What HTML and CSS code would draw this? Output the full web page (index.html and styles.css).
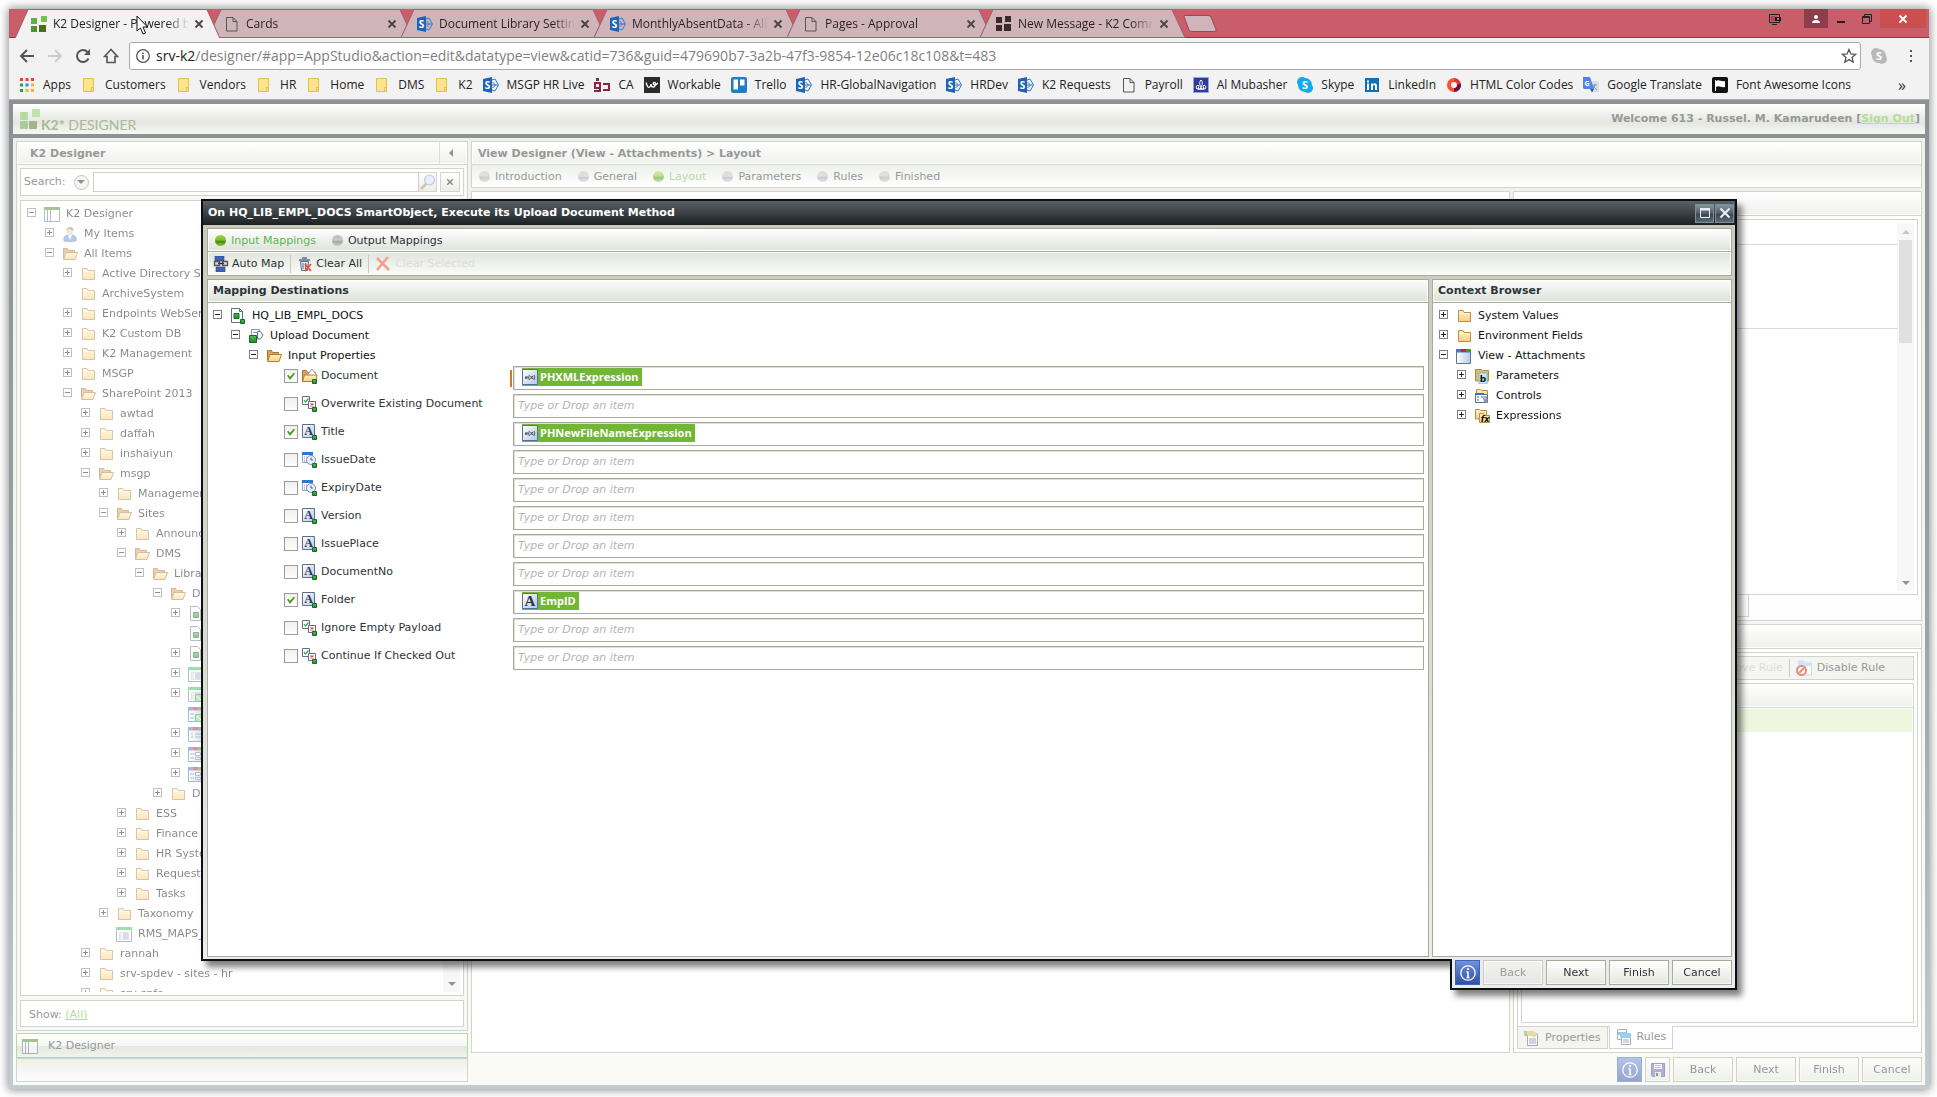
FILE: index.html
```
<!DOCTYPE html>
<html lang="en">
<head>
<meta charset="utf-8">
<title>K2 Designer</title>
<link rel="stylesheet" href="styles.css">
</head>
<body>
<svg class="defs" aria-hidden="true">
  <defs>
    <linearGradient id="gfold" x1="0" y1="0" x2="0" y2="1"><stop offset="0" stop-color="#fff3c4"/><stop offset="1" stop-color="#f8cf80"/></linearGradient>
    <linearGradient id="ggreen" x1="0" y1="0" x2="0" y2="1"><stop offset="0" stop-color="#5cb65c"/><stop offset="1" stop-color="#1d8a2c"/></linearGradient>
    <linearGradient id="gblue" x1="0" y1="0" x2="1" y2="1"><stop offset="0" stop-color="#fff"/><stop offset="1" stop-color="#b4c6e8"/></linearGradient>
    <linearGradient id="gview" x1="0" y1="0" x2="1" y2="0"><stop offset="0" stop-color="#fff"/><stop offset="1" stop-color="#b9c9e6"/></linearGradient>
    <symbol id="i-folder" viewBox="0 0 16 16"><path d="M2.500 13.500V2.500h4.500l1 2h6.500v9h-12z" fill="url(#gfold)" stroke="#b98b4e"/><path d="M3.500 5.500h10" stroke="#fff8dc"/></symbol>
    <symbol id="i-open" viewBox="0 0 16 16"><path d="M1.500 12.500V2.500h4l1 2h6v3" fill="#dba258" stroke="#a97536"/><path d="M1.500 13.500l2.500-7h11.500l-2.500 7z" fill="url(#gfold)" stroke="#b07e3e"/></symbol>
    <symbol id="i-layout" viewBox="0 0 16 16"><path d="M.5 1.500h15v14H.5z" fill="#fff" stroke="#6c7a94"/><path d="M0 1h16v3H0z" fill="#4f8a2a"/><path d="M3.500 4v11M6.500 4v11" stroke="#6c7a94"/></symbol>
    <symbol id="i-user" viewBox="0 0 16 16"><path d="M2 15c-1-4 1-6 4-6h4c3 0 5 2 4 6-3 1-9 1-12 0z" fill="#6c97dc" stroke="#4a6fb5" stroke-width=".6"/><path d="M6 9l2 5 2-5z" fill="#fff"/><circle cx="8" cy="5" r="3.300" fill="#f2cf9c"/><path d="M4.500 5c-.5-5 7.500-5.500 7 0-1-2-4-1-5-2.500C6 3.500 5 4 4.500 5z" fill="#8b8b86"/></symbol>
    <symbol id="i-doc" viewBox="0 0 16 16"><path d="M2.500.5h7l3 3v11h-10z" fill="#fff" stroke="#6c7a94"/><path d="M5.500 6.500h5v5h-5z" fill="url(#ggreen)" stroke="#146c20"/></symbol>
    <symbol id="i-docg" viewBox="0 0 16 16"><path d="M1.500.5h8l3 3v11h-11z" fill="#fff" stroke="#5d6f91"/><path d="M9.500.5v3h3" fill="none" stroke="#5d6f91"/><path d="M4 5.500h5v5H4z" fill="url(#ggreen)" stroke="#146c20"/><path d="M10.500 11.500h4v4h-4z" fill="url(#ggreen)" stroke="#146c20"/></symbol>
    <symbol id="i-upload" viewBox="0 0 16 16"><path d="M3.500 1.500h8v9h-8z" fill="#fff" stroke="#8a97b0"/><path d="M9.500 3.500h3l2.500 3.500-2.500 4h-3z" fill="#fff" stroke="#5d6f91"/><path d="M5 4.500h5" stroke="#8a97b0"/><path d="M1.500 7.500h7v7h-7z" fill="url(#ggreen)" stroke="#146c20"/></symbol>
    <symbol id="i-list" viewBox="0 0 16 16"><path d="M.5 1.500h15v14H.5z" fill="#fff" stroke="#6c7a94"/><path d="M0 1h16v3H0z" fill="#3fbf52"/><path d="M3.500 6.500h9v7h-9z" fill="none" stroke="#c3cbd8"/><path d="M4.500 8h1m-1 2h1m-1 2h1" stroke="#3fae52"/><path d="M7 8h5M7 10h5M7 12h5" stroke="#6c7a94"/></symbol>
    <symbol id="i-listg" viewBox="0 0 16 16"><use href="#i-list"/><path d="M7.500 8.500h8v7h-8z" fill="#7fd98b" stroke="#2d9a3c"/><path d="M9 10l4 4" stroke="#fff"/></symbol>
    <symbol id="i-view" viewBox="0 0 16 16"><path d="M.5 1.500h14v14H.5z" fill="url(#gview)" stroke="#5b73a8"/><path d="M0 1h15v3.500H0z" fill="#4b74d0"/><path d="M5 1h5v3H5z" fill="#c81f2c"/><path d="M10 1h5v3h-5z" fill="#3f9a2e"/></symbol>
    <symbol id="i-viewl" viewBox="0 0 16 16"><use href="#i-view"/><path d="M3 8h2m-2 3h2M7 8h6M7 11h6" stroke="#6c7a94"/></symbol>
    <symbol id="i-viewg" viewBox="0 0 16 16"><use href="#i-view"/><path d="M2 8h4m-4 4h4" stroke="#6c7a94"/><path d="M7.500 8.500h8v7h-8z" fill="#7fd98b" stroke="#2d9a3c"/><path d="M9 10l4 4" stroke="#fff"/></symbol>
    <symbol id="i-viewf" viewBox="0 0 16 16"><use href="#i-view"/><path d="M2 8h4m-4 4h4" stroke="#6c7a94"/><path d="M7.500 6.500h5v3h-5zM7.500 11.500h5v2h-5z" fill="#fff" stroke="#6c7a94"/></symbol>
    <symbol id="i-prop-doc" viewBox="0 0 16 16"><path d="M.5 13.500V2.500h4l1 2h8v9z" fill="#dba258" stroke="#a97536"/><path d="M6 6l4-5 4 5v3H6z" fill="#fff" stroke="#8a97b0"/><path d="M.5 13.500l2-6.500h12.500l-1 6.500z" fill="url(#gfold)" stroke="#b07e3e"/><path d="M10.500 11.500h4v4h-4z" fill="url(#ggreen)" stroke="#146c20"/></symbol>
    <symbol id="i-bool" viewBox="0 0 16 16"><path d="M.5.500h7v8h-7z" fill="#fff" stroke="#5d6f91"/><path d="M2 4l1.500 2L6.500 2.500" fill="none" stroke="#2da83a" stroke-width="1.200"/><path d="M6.500 5.500h7v7h-7z" fill="#fff" stroke="#5d6f91"/><path d="M8.500 7.500l3 3m0-3l-3 3" stroke="#e2492f" stroke-width="1.300"/><path d="M10.500 11.500h4v4h-4z" fill="url(#ggreen)" stroke="#146c20"/></symbol>
    <symbol id="i-letter" viewBox="0 0 16 16"><path d="M.5.500h12v13H.5z" fill="url(#gblue)" stroke="#5d6f91"/><text class="glyph" x="6.500" y="11" text-anchor="middle">A</text></symbol>
    <symbol id="i-text" viewBox="0 0 16 16"><use href="#i-letter"/><path d="M10.500 11.500h4v4h-4z" fill="url(#ggreen)" stroke="#146c20"/></symbol>
    <symbol id="i-date" viewBox="0 0 16 16"><path d="M.5 1.500h10v9H.5z" fill="#fff" stroke="#8aa0c8"/><path d="M0 0h11v3H0z" fill="#2878d8"/><path d="M2 5h1m1 0h1M2 7h1m1 0h1M2 9h1" stroke="#8a97b0"/><circle cx="9" cy="8" r="4.500" fill="#eaf0fb" stroke="#7d90b8"/><path d="M9 5.500V8h2" fill="none" stroke="#4b5a7d"/><path d="M10.500 11.500h4v4h-4z" fill="url(#ggreen)" stroke="#146c20"/></symbol>
    <symbol id="i-expr" viewBox="0 0 16 16"><path d="M.5.500h15v15H.5z" fill="url(#gblue)" stroke="#5d6f91"/><text class="tiny" x="8" y="10" text-anchor="middle">e(x)</text></symbol>
    <symbol id="i-chipa" viewBox="0 0 16 16"><path d="M.5.500h15v15H.5z" fill="url(#gblue)" stroke="#5d6f91"/><text class="glyph big" x="8" y="13" text-anchor="middle">A</text></symbol>
    <symbol id="i-params" viewBox="0 0 16 16"><path d="M1.500 13V1.500h6l1 1h6V13z" fill="#d9bd6c" stroke="#a98c3e"/><path d="M5 5h8v11H5z" fill="#cfe9fa" stroke="#7cb8dc"/><text class="mini" x="9" y="14" text-anchor="middle">b</text></symbol>
    <symbol id="i-controls" viewBox="0 0 16 16"><path d="M2.500 8V1.500h4l1 1h6V8z" fill="url(#gfold)" stroke="#b98b4e"/><path d="M1.500 6.500h12v8h-12z" fill="#fff" stroke="#5d6f91"/><path d="M1 5h9v2H1z" fill="#2878d8"/><path d="M3 9h2m-2 3h2M7 9h6v5" stroke="#5d6f91" fill="none"/><path d="M9 10l5 1-1 4-3-1z" fill="#8a97b0"/></symbol>
    <symbol id="i-exprs" viewBox="0 0 16 16"><path d="M1.500 11V1.500h4l1 1h6V11z" fill="url(#gfold)" stroke="#b98b4e"/><path d="M5.500 14.500V5.500h4l1 2h5v7z" fill="url(#gfold)" stroke="#b98b4e"/><text class="mini it" x="11" y="14" text-anchor="middle">fx</text></symbol>
    <symbol id="i-automap" viewBox="0 0 16 16"><path d="M2 0h9v5H2zM3 11h9v5H3z" fill="#3f63b5" stroke="#27448c" stroke-width=".6"/><path d="M1.500 5.500h5v4h-5zM9.500 5.500h5v4h-5z" fill="#ddd" stroke="#555" stroke-width="1.400"/><path d="M5 7.500h6" stroke="#333" stroke-width="1.500"/></symbol>
    <symbol id="i-clear" viewBox="0 0 16 16"><path d="M3.500 5.500h8l-1 9h-6z" fill="#dfe6f0" stroke="#5d6f91"/><path d="M2 4h11M5 2h5" stroke="#5d6f91" stroke-width="1.500"/><path d="M6 7v6M8.500 7v6" stroke="#5d6f91"/><path d="M8 8l6 7m0-7l-6 7" stroke="#e5502d" stroke-width="1.800"/></symbol>
    <symbol id="i-cross" viewBox="0 0 16 16"><path d="M2 2l12 12M13 1L2 14" stroke="#f0a08c" stroke-width="2.500" fill="none"/></symbol>
    <symbol id="i-info" viewBox="0 0 16 16"><circle cx="8" cy="8" r="7.200" fill="none" stroke="#fff" stroke-width="1.300"/><path d="M8 6.500v6M6.500 7h1.500M6.500 12.500h3" stroke="#fff" stroke-width="1.600"/><circle cx="8" cy="4" r="1.100" fill="#fff"/></symbol>
    <symbol id="i-save" viewBox="0 0 16 16"><path d="M1.500 1.500h13v13h-12l-1-1z" fill="#6a62bd" stroke="#4d4796"/><path d="M4 2h8v5H4z" fill="#fff"/><path d="M5 3.500h6M5 5.500h6" stroke="#888"/><path d="M5 10h6v5H5z" fill="#ddd"/><path d="M6 11h2v3H6z" fill="#333"/></symbol>
    <symbol id="i-disable" viewBox="0 0 16 16"><path d="M2.500 1h5l1 2h7v12h-9" fill="#fff" stroke="#b5c6dc"/><path d="M2 1h5l1 2h8v3H2z" fill="#b4dbf6"/><circle cx="5.500" cy="10.500" r="4.500" fill="#fff" stroke="#d8452e" stroke-width="2"/><path d="M3 13l5-5" stroke="#d8452e" stroke-width="2"/></symbol>
    <symbol id="i-props" viewBox="0 0 16 16"><path d="M3.500 3.500h10v12h-10z" fill="#fff" stroke="#6c7a94"/><path d="M5 9h7M5 11h7M5 13h7" stroke="#6c7a94"/><path d="M1 1l8 0 5 3-3 3-5-1-5-1z" fill="#e3c57a"/><path d="M0 1h3v5H0z" fill="#7cc46a"/></symbol>
    <symbol id="i-rules" viewBox="0 0 16 16"><path d="M1.500.5h9v10h-9z" fill="#fff" stroke="#6c7a94"/><path d="M2 3h8v3H2z" fill="#59a6e0"/><path d="M5.500 4.500h9v11h-9z" fill="#fff" stroke="#6c7a94"/><path d="M4 4h11v5H4z" fill="#59b0ea"/><path d="M7 11h6M7 13h6" stroke="#6c7a94"/></symbol>
    <symbol id="i-search" viewBox="0 0 16 16"><path d="M6 10l-5 5" stroke="#c9a56e" stroke-width="2.500"/><circle cx="9.500" cy="6" r="5" fill="#dcebfa" stroke="#98aecb" stroke-width="1.200"/></symbol>
    <symbol id="i-page" viewBox="0 0 16 16"><path d="M2.500 1.500h6.500l4 4v9.500H2.500z" fill="none" stroke="#555"/><path d="M9 1.500v4h4" fill="none" stroke="#555"/></symbol>
    <symbol id="i-sp" viewBox="0 0 16 16"><path d="M9 3l3-1 3.500 6L12 14l-3-1M8 8h7M9.500 5l3 3-3 3" fill="none" stroke="#2e7bd6"/><path d="M0 2l9-2v16l-9-2z" fill="#1d63b8"/><text class="s" x="4.500" y="11.500" text-anchor="middle">S</text></symbol>
    <symbol id="i-bm" viewBox="0 0 16 16"><path d="M2.500 1.500h10v13h-10z" fill="#fde58e" stroke="#e3c04c"/><path d="M10.500 10.500h2v4h-2z" fill="#fde58e" stroke="#e3c04c"/></symbol>
    <symbol id="i-k2" viewBox="0 0 16 16"><path d="M0 2h6v6H0z" fill="#5fb23f"/><path d="M10 0h6v6h-6z" fill="#74c24f"/><path d="M0 10h6v6H0z" fill="#4f9430"/><path d="M8 9h7v7H8z" fill="#4a6e1c"/></symbol>
    <symbol id="i-k2d" viewBox="0 0 16 16"><path d="M0 1h6v6H0zM9 0h6v6H9zM0 9h6v6H0zM8 8h7v7H8z" fill="#3a2a2e"/></symbol>
    <symbol id="i-apps" viewBox="0 0 16 16"><path d="M1 1h3v3H1zM6.500 1h3v3h-3zM12 1h3v3h-3z" fill="#ea4335"/><path d="M1 6.500h3v3H1z" fill="#2aa14f"/><path d="M6.500 6.500h3v3h-3z" fill="#3f82f0"/><path d="M12 6.500h3v3h-3zM6.500 12h3v3h-3zM12 12h3v3h-3z" fill="#f5b32a"/><path d="M1 12h3v3H1z" fill="#2aa14f"/></symbol>
    <symbol id="i-ca" viewBox="0 0 16 16"><path d="M0 5h7v10H0v-2h5v-1H0zM2 7v3h3V7zM9 6h7v8H9v-2h5V8H9z" fill="#8f2245" fill-rule="evenodd"/><path d="M2 1h3v3H2z" fill="#8f2245"/></symbol>
    <symbol id="i-work" viewBox="0 0 16 16"><path d="M0 0h16v16H0z" fill="#2b2b2b"/><path d="M2 5.500l1.500 4c1 1.500 3 1 3.500-2.500 0 4 4 4 4.500.5s-3.500-2-2 0c1 1 3 0 4.500-1.500" fill="none" stroke="#fff" stroke-width="1.300"/></symbol>
    <symbol id="i-trello" viewBox="0 0 16 16"><rect width="16" height="16" rx="2" fill="#1c7fc4"/><path d="M2.500 2.500h4.500v10H2.500zM9 2.500h4.500v6H9z" fill="#fff"/></symbol>
    <symbol id="i-mub" viewBox="0 0 16 16"><path d="M.5.500h15v15H.5z" fill="#2f3a9a" stroke="#9aa2d8"/><path d="M8 3c-3 3 0 6 0 9 0-3 3-6 0-9M4 12c-2-2 0-5 2-3l-1 3h6l-1-3c2-2 4 1 2 3z" fill="none" stroke="#fff"/></symbol>
    <symbol id="i-skype" viewBox="0 0 16 16"><circle cx="5" cy="5" r="5" fill="currentColor"/><circle cx="11" cy="11" r="5" fill="currentColor"/><circle cx="8" cy="8" r="7" fill="currentColor"/><text class="s sk" x="8" y="12" text-anchor="middle">S</text></symbol>
    <symbol id="i-in" viewBox="0 0 16 16"><path d="M1 1h14v14H1z" fill="#0f72b5"/><path d="M3 6.500h2V13H3zM3 3.500h2v2H3zM7 6.500h2v1c1-2 4-1.500 4 1.500v4h-2V9.500c0-2-2-2-2 0V13H7z" fill="#fff"/></symbol>
    <symbol id="i-html" viewBox="0 0 16 16"><path d="M8 13A5 5 0 0 1 8 3" fill="none" stroke="#f9542f" stroke-width="4"/><path d="M8 3A5 5 0 0 1 13 8" fill="none" stroke="#e0382f" stroke-width="4"/><path d="M13 7A5 5 0 0 1 8 13" fill="none" stroke="#6f1140" stroke-width="4"/></symbol>
    <symbol id="i-gt" viewBox="0 0 16 16"><path d="M7 4h9v11H9z" fill="#d9dce1"/><path d="M9 8h5m-2-1c0 3-1 4-3 5m1-3l4 4" stroke="#8b95a5" fill="none"/><path d="M0 0h7l4 12H1l-1-1z" fill="#4b86ee"/><path d="M7 12h4l-2 3.500z" fill="#3653c0"/><text class="s g" x="4" y="8.500" text-anchor="middle">G</text></symbol>
    <symbol id="i-fa" viewBox="0 0 16 16"><rect width="16" height="16" rx="2" fill="#111"/><path d="M3.500 3v11" stroke="#fff"/><path d="M4 4c3-2 5 1 9 0v6c-4 1-6-2-9 0z" fill="#fff"/></symbol>
    <symbol id="i-x" viewBox="0 0 10 10"><path d="M1.500 1.500l7 7m0-7l-7 7" stroke="#4c4245" stroke-width="1.800"/></symbol>
  </defs>
</svg>

<div class="window">
  <header class="tabstrip">
    <nav class="tabs" aria-label="Browser tabs">
      <div class="tab active"><svg class="shape" viewBox="0 0 205 28" preserveAspectRatio="none"><path d="M0 28.500L13 .5H192L205 28.500"/></svg><svg class="ic"><use href="#i-k2"/></svg><span>K2 Designer - Powered by</span><button aria-label="Close tab"><svg><use href="#i-x"/></svg></button></div>
      <div class="tab"><svg class="shape" viewBox="0 0 205 28" preserveAspectRatio="none"><path d="M0 27.500L13 .5H192L205 27.500z"/></svg><svg class="ic"><use href="#i-page"/></svg><span>Cards</span><button aria-label="Close tab"><svg><use href="#i-x"/></svg></button></div>
      <div class="tab"><svg class="shape" viewBox="0 0 205 28" preserveAspectRatio="none"><path d="M0 27.500L13 .5H192L205 27.500z"/></svg><svg class="ic"><use href="#i-sp"/></svg><span>Document Library Setting</span><button aria-label="Close tab"><svg><use href="#i-x"/></svg></button></div>
      <div class="tab"><svg class="shape" viewBox="0 0 205 28" preserveAspectRatio="none"><path d="M0 27.500L13 .5H192L205 27.500z"/></svg><svg class="ic"><use href="#i-sp"/></svg><span>MonthlyAbsentData - All</span><button aria-label="Close tab"><svg><use href="#i-x"/></svg></button></div>
      <div class="tab"><svg class="shape" viewBox="0 0 205 28" preserveAspectRatio="none"><path d="M0 27.500L13 .5H192L205 27.500z"/></svg><svg class="ic"><use href="#i-page"/></svg><span>Pages - Approval</span><button aria-label="Close tab"><svg><use href="#i-x"/></svg></button></div>
      <div class="tab"><svg class="shape" viewBox="0 0 205 28" preserveAspectRatio="none"><path d="M0 27.500L13 .5H192L205 27.500z"/></svg><svg class="ic"><use href="#i-k2d"/></svg><span>New Message - K2 Comm</span><button aria-label="Close tab"><svg><use href="#i-x"/></svg></button></div>
      <button class="newtab" aria-label="New tab"><svg viewBox="0 0 34 17"><path d="M1 1.500Q1 .5 2 .5H25Q27 .5 28 2L33 14.500Q33 16.500 32 16.500H9Q7 16.500 6 15z" fill="#cfb5b9" stroke="#a04552"/></svg></button>
    </nav>
    <div class="winbtns">
      <button class="wb cast" aria-label="Cast"><svg viewBox="0 0 12 12"><path d="M.5 1.500h10v8H.5zM3 11.500h5" fill="none" stroke="#222"/><path d="M3 3v5M5 3v5" stroke="#7c3640"/><path d="M6 4h6v4H6z" fill="#111"/><path d="M8 5.500h2v1H8z" fill="#fff"/></svg></button>
      <button class="wb user" aria-label="Profile"><svg viewBox="0 0 12 12"><circle cx="6" cy="4" r="2" fill="#fff"/><path d="M2 10c0-4 8-4 8 0z" fill="#fff"/></svg></button>
      <button class="wb" aria-label="Minimize"><svg viewBox="0 0 12 12"><path d="M2 8h8v2H2z" fill="#222"/></svg></button>
      <button class="wb" aria-label="Restore"><svg viewBox="0 0 12 12"><path d="M3.500 3V1.500h7v7H9" fill="none" stroke="#222"/><path d="M1.500 3.500h7v7h-7zM1 4.500h8" fill="none" stroke="#222"/></svg></button>
      <button class="wb close" aria-label="Close"><svg viewBox="0 0 12 12"><path d="M2.500 2.500l7 7m0-7l-7 7" stroke="#fff" stroke-width="1.800"/></svg></button>
    </div>
  </header>

  <div class="toolbar">
    <button aria-label="Back"><svg viewBox="0 0 16 16"><path d="M15 8H2M8 2L2 8l6 6" fill="none" stroke="#555" stroke-width="2"/></svg></button>
    <button aria-label="Forward"><svg viewBox="0 0 16 16"><path d="M1 8h13M8 2l6 6-6 6" fill="none" stroke="#ccc" stroke-width="2"/></svg></button>
    <button aria-label="Reload"><svg viewBox="0 0 16 16"><path d="M13.500 10.500A6 6 0 1 1 12.500 4" fill="none" stroke="#555" stroke-width="2"/><path d="M15 1v6H9z" fill="#555"/></svg></button>
    <button aria-label="Home"><svg viewBox="0 0 16 16"><path d="M8 1.500L1.500 8.500h2.500v6h8v-6h2.500z" fill="none" stroke="#555" stroke-width="1.600"/></svg></button>
    <div class="omnibox">
      <svg viewBox="0 0 16 16"><circle cx="8" cy="8" r="6.300" fill="none" stroke="#555" stroke-width="1.300"/><path d="M8 7v4.500M8 4.500V6" stroke="#555" stroke-width="1.600"/></svg>
      <span class="url"><b>srv-k2</b>/designer/#app=AppStudio&amp;action=edit&amp;datatype=view&amp;catid=736&amp;guid=479690b7-3a2b-47f3-9854-12e06c18c108&amp;t=483</span>
      <svg viewBox="0 0 16 16"><path d="M8 1.500l1.900 4.500 4.800.3-3.700 3.100 1.200 4.800L8 11.600l-4.200 2.600L5 9.400 1.300 6.300 6.100 6z" fill="none" stroke="#555" stroke-width="1.300"/></svg>
    </div>
    <svg class="skg"><use href="#i-skype"/></svg>
    <button class="more" aria-label="Menu"><svg viewBox="0 0 16 16"><path d="M7 2h2v2H7zM7 7h2v2H7zM7 12h2v2H7z" fill="#555"/></svg></button>
  </div>

  <nav class="bookmarks" aria-label="Bookmarks">
    <a href="#"><svg><use href="#i-apps"/></svg>Apps</a>
    <a href="#"><svg><use href="#i-bm"/></svg>Customers</a>
    <a href="#"><svg><use href="#i-bm"/></svg>Vendors</a>
    <a href="#"><svg><use href="#i-bm"/></svg>HR</a>
    <a href="#"><svg><use href="#i-bm"/></svg>Home</a>
    <a href="#"><svg><use href="#i-bm"/></svg>DMS</a>
    <a href="#"><svg><use href="#i-bm"/></svg>K2</a>
    <a href="#"><svg><use href="#i-sp"/></svg>MSGP HR Live</a>
    <a href="#"><svg><use href="#i-ca"/></svg>CA</a>
    <a href="#"><svg><use href="#i-work"/></svg>Workable</a>
    <a href="#"><svg><use href="#i-trello"/></svg>Trello</a>
    <a href="#"><svg><use href="#i-sp"/></svg>HR-GlobalNavigation</a>
    <a href="#"><svg><use href="#i-sp"/></svg>HRDev</a>
    <a href="#"><svg><use href="#i-sp"/></svg>K2 Requests</a>
    <a href="#"><svg><use href="#i-page"/></svg>Payroll</a>
    <a href="#"><svg><use href="#i-mub"/></svg>Al Mubasher</a>
    <a href="#"><svg class="skb"><use href="#i-skype"/></svg>Skype</a>
    <a href="#"><svg><use href="#i-in"/></svg>LinkedIn</a>
    <a href="#"><svg><use href="#i-html"/></svg>HTML Color Codes</a>
    <a href="#"><svg><use href="#i-gt"/></svg>Google Translate</a>
    <a href="#"><svg><use href="#i-fa"/></svg>Font Awesome Icons</a>
    <button class="overflow" aria-label="More bookmarks">»</button>
  </nav>

  <div class="app">
    <header class="brandbar">
      <svg class="logo" viewBox="0 0 21 20"><rect y="3" width="8" height="8" rx="1" fill="#b4dca4"/><rect x="12" width="8" height="8" rx="1" fill="#bce4ae"/><rect y="12" width="8" height="8" rx="1" fill="#a9cc98"/><rect x="9" y="12" width="8" height="8" rx="1" fill="#a3b48e"/></svg>
      <h1><b>K2*</b> DESIGNER</h1>
      <p>Welcome 613 - Russel. M. Kamarudeen [<a href="#">Sign Out</a>]</p>
    </header>

    <div class="workspace">
      <aside class="side">
        <div class="bar head"><h2>K2 Designer</h2><button class="collapse" aria-label="Collapse"></button></div>
        <div class="sidebody">
          <div class="searchrow">
            <label for="q">Search:</label><button class="round" aria-label="Search options"></button>
            <input id="q" type="text"><button class="sq glass" aria-label="Search"><svg><use href="#i-search"/></svg></button>
            <button class="sq" aria-label="Clear"><svg class="tinyx"><use href="#i-x"/></svg></button>
          </div>
          <div class="treebox">
            <ul class="tree faded">
              <li class="l0"><button class="tw minus"></button><svg><use href="#i-layout"/></svg>K2 Designer</li>
              <li class="l1"><button class="tw"></button><svg><use href="#i-user"/></svg>My Items</li>
              <li class="l1"><button class="tw minus"></button><svg><use href="#i-open"/></svg>All Items</li>
              <li class="l2"><button class="tw"></button><svg><use href="#i-folder"/></svg>Active Directory Service</li>
              <li class="l2"><i class="tw none"></i><svg><use href="#i-folder"/></svg>ArchiveSystem</li>
              <li class="l2"><button class="tw"></button><svg><use href="#i-folder"/></svg>Endpoints WebService</li>
              <li class="l2"><button class="tw"></button><svg><use href="#i-folder"/></svg>K2 Custom DB</li>
              <li class="l2"><button class="tw"></button><svg><use href="#i-folder"/></svg>K2 Management</li>
              <li class="l2"><button class="tw"></button><svg><use href="#i-folder"/></svg>MSGP</li>
              <li class="l2"><button class="tw minus"></button><svg><use href="#i-open"/></svg>SharePoint 2013</li>
              <li class="l3"><button class="tw"></button><svg><use href="#i-folder"/></svg>awtad</li>
              <li class="l3"><button class="tw"></button><svg><use href="#i-folder"/></svg>daffah</li>
              <li class="l3"><button class="tw"></button><svg><use href="#i-folder"/></svg>inshaiyun</li>
              <li class="l3"><button class="tw minus"></button><svg><use href="#i-open"/></svg>msgp</li>
              <li class="l4"><button class="tw"></button><svg><use href="#i-folder"/></svg>Management</li>
              <li class="l4"><button class="tw minus"></button><svg><use href="#i-open"/></svg>Sites</li>
              <li class="l5"><button class="tw"></button><svg><use href="#i-folder"/></svg>Announcements</li>
              <li class="l5"><button class="tw minus"></button><svg><use href="#i-open"/></svg>DMS</li>
              <li class="l6"><button class="tw minus"></button><svg><use href="#i-open"/></svg>Libraries</li>
              <li class="l7"><button class="tw minus"></button><svg><use href="#i-open"/></svg>Documents</li>
              <li class="l8"><button class="tw"></button><svg><use href="#i-doc"/></svg></li>
              <li class="l8"><i class="tw none"></i><svg><use href="#i-doc"/></svg></li>
              <li class="l8"><button class="tw"></button><svg><use href="#i-doc"/></svg></li>
              <li class="l8"><button class="tw"></button><svg><use href="#i-list"/></svg></li>
              <li class="l8"><button class="tw"></button><svg><use href="#i-listg"/></svg></li>
              <li class="l8"><i class="tw none"></i><svg><use href="#i-viewg"/></svg></li>
              <li class="l8"><button class="tw"></button><svg><use href="#i-viewl"/></svg></li>
              <li class="l8"><button class="tw"></button><svg><use href="#i-viewf"/></svg></li>
              <li class="l8"><button class="tw"></button><svg><use href="#i-viewf"/></svg></li>
              <li class="l7"><button class="tw"></button><svg><use href="#i-folder"/></svg>Documents</li>
              <li class="l5"><button class="tw"></button><svg><use href="#i-folder"/></svg>ESS</li>
              <li class="l5"><button class="tw"></button><svg><use href="#i-folder"/></svg>Finance</li>
              <li class="l5"><button class="tw"></button><svg><use href="#i-folder"/></svg>HR System</li>
              <li class="l5"><button class="tw"></button><svg><use href="#i-folder"/></svg>Requests</li>
              <li class="l5"><button class="tw"></button><svg><use href="#i-folder"/></svg>Tasks</li>
              <li class="l4"><button class="tw"></button><svg><use href="#i-folder"/></svg>Taxonomy</li>
              <li class="l4"><i class="tw none"></i><svg><use href="#i-list"/></svg>RMS_MAPS_</li>
              <li class="l3"><button class="tw"></button><svg><use href="#i-folder"/></svg>rannah</li>
              <li class="l3"><button class="tw"></button><svg><use href="#i-folder"/></svg>srv-spdev - sites - hr</li>
              <li class="l3"><button class="tw"></button><svg><use href="#i-folder"/></svg>srv-spfe</li>
            </ul>
            <div class="scroll"><span class="dn"></span></div>
          </div>
          <p class="show">Show: <a href="#">(All)</a></p>
        </div>
        <button class="navitem"><svg><use href="#i-layout"/></svg>K2 Designer</button>
        <div class="navfoot"></div>
      </aside>

      <main class="main">
        <div class="bar head"><h2>View Designer (View - Attachments) &gt; Layout</h2></div>
        <div class="steps">
          <span class="step">Introduction</span><span class="step">General</span><span class="step on">Layout</span><span class="step">Parameters</span><span class="step">Rules</span><span class="step">Finished</span>
        </div>
        <div class="cols">
          <section class="canvas"><div class="bar inner"></div></section>
          <div class="right">
            <section class="panel toolbox">
              <div class="bar inner"></div>
              <div class="list">
                <div class="groups"><div class="group"></div><div class="group tall"></div></div>
                <div class="scroll"><span class="up"></span><span class="thumb"></span><span class="dn"></span></div>
              </div>
              <div class="stub"></div>
            </section>
            <section class="panel rules">
              <div class="bar inner"></div>
              <div class="rulebody">
                <div class="ruletools"><button class="off">Remove Rule</button><i class="sep"></i><button><svg><use href="#i-disable"/></svg>Disable Rule</button></div>
                <div class="rulelist"><div class="bar inner"></div><div class="sel"></div></div>
              </div>
              <div class="ptabs"><button><svg><use href="#i-props"/></svg>Properties</button><button class="cur"><svg><use href="#i-rules"/></svg>Rules</button></div>
            </section>
          </div>
        </div>
        <footer class="buttons dim">
          <button class="info" aria-label="Info"><svg><use href="#i-info"/></svg></button>
          <button class="icon" aria-label="Save"><svg><use href="#i-save"/></svg></button>
          <button>Back</button><button>Next</button><button>Finish</button><button>Cancel</button>
        </footer>
      </main>
    </div>
  </div>
</div>

<div class="dialog" role="dialog" aria-labelledby="dt">
  <div class="dframe">
    <div class="dtitle"><h2 id="dt">On HQ_LIB_EMPL_DOCS SmartObject, Execute its Upload Document Method</h2>
      <button aria-label="Maximize"><svg viewBox="0 0 12 12"><path d="M1.500 1.500h9v9h-9z" fill="none" stroke="#e8ecee"/><path d="M1 1h10v2.500H1z" fill="#e8ecee"/></svg></button>
      <button aria-label="Close"><svg viewBox="0 0 12 12"><path d="M1.500 1.500l9 9m0-9l-9 9" stroke="#e8ecee" stroke-width="2.200"/></svg></button>
    </div>
    <div class="dbody">
      <div class="dtools">
        <div class="drow1"><span class="step on">Input Mappings</span><span class="step">Output Mappings</span></div>
        <div class="drow2"><button><svg><use href="#i-automap"/></svg>Auto Map</button><i class="sep"></i><button><svg><use href="#i-clear"/></svg>Clear All</button><i class="sep"></i><button class="off"><svg><use href="#i-cross"/></svg>Clear Selected</button></div>
      </div>
      <div class="dcols">
        <section class="dpanel dest">
          <h3>Mapping Destinations</h3>
          <ul class="tree">
            <li class="l0"><button class="tw minus"></button><svg><use href="#i-docg"/></svg>HQ_LIB_EMPL_DOCS</li>
            <li class="l1"><button class="tw minus"></button><svg><use href="#i-upload"/></svg>Upload Document</li>
            <li class="l2"><button class="tw minus"></button><svg><use href="#i-open"/></svg>Input Properties</li>
          </ul>
          <div class="maps">
            <div class="map req"><input type="checkbox" id="c1" checked><label for="c1"><svg><use href="#i-prop-doc"/></svg>Document</label><div class="field"><span class="chip"><svg><use href="#i-expr"/></svg>PHXMLExpression</span></div></div>
            <div class="map"><input type="checkbox" id="c2"><label for="c2"><svg><use href="#i-bool"/></svg>Overwrite Existing Document</label><input class="field" type="text" aria-label="Overwrite Existing Document value" placeholder="Type or Drop an item"></div>
            <div class="map"><input type="checkbox" id="c3" checked><label for="c3"><svg><use href="#i-text"/></svg>Title</label><div class="field"><span class="chip"><svg><use href="#i-expr"/></svg>PHNewFileNameExpression</span></div></div>
            <div class="map"><input type="checkbox" id="c4"><label for="c4"><svg><use href="#i-date"/></svg>IssueDate</label><input class="field" type="text" aria-label="IssueDate value" placeholder="Type or Drop an item"></div>
            <div class="map"><input type="checkbox" id="c5"><label for="c5"><svg><use href="#i-date"/></svg>ExpiryDate</label><input class="field" type="text" aria-label="ExpiryDate value" placeholder="Type or Drop an item"></div>
            <div class="map"><input type="checkbox" id="c6"><label for="c6"><svg><use href="#i-text"/></svg>Version</label><input class="field" type="text" aria-label="Version value" placeholder="Type or Drop an item"></div>
            <div class="map"><input type="checkbox" id="c7"><label for="c7"><svg><use href="#i-text"/></svg>IssuePlace</label><input class="field" type="text" aria-label="IssuePlace value" placeholder="Type or Drop an item"></div>
            <div class="map"><input type="checkbox" id="c8"><label for="c8"><svg><use href="#i-text"/></svg>DocumentNo</label><input class="field" type="text" aria-label="DocumentNo value" placeholder="Type or Drop an item"></div>
            <div class="map"><input type="checkbox" id="c9" checked><label for="c9"><svg><use href="#i-text"/></svg>Folder</label><div class="field"><span class="chip"><svg><use href="#i-chipa"/></svg>EmpID</span></div></div>
            <div class="map"><input type="checkbox" id="c10"><label for="c10"><svg><use href="#i-bool"/></svg>Ignore Empty Payload</label><input class="field" type="text" aria-label="Ignore Empty Payload value" placeholder="Type or Drop an item"></div>
            <div class="map"><input type="checkbox" id="c11"><label for="c11"><svg><use href="#i-bool"/></svg>Continue If Checked Out</label><input class="field" type="text" aria-label="Continue If Checked Out value" placeholder="Type or Drop an item"></div>
          </div>
        </section>
        <section class="dpanel ctx">
          <h3>Context Browser</h3>
          <ul class="tree">
            <li class="l0"><button class="tw"></button><svg><use href="#i-folder"/></svg>System Values</li>
            <li class="l0"><button class="tw"></button><svg><use href="#i-folder"/></svg>Environment Fields</li>
            <li class="l0"><button class="tw minus"></button><svg><use href="#i-view"/></svg>View - Attachments</li>
            <li class="l1"><button class="tw"></button><svg><use href="#i-params"/></svg>Parameters</li>
            <li class="l1"><button class="tw"></button><svg><use href="#i-controls"/></svg>Controls</li>
            <li class="l1"><button class="tw"></button><svg><use href="#i-exprs"/></svg>Expressions</li>
          </ul>
        </section>
      </div>
    </div>
  </div>
  <footer class="buttons dfoot">
    <button class="info" aria-label="Info"><svg><use href="#i-info"/></svg></button>
    <button disabled>Back</button><button>Next</button><button>Finish</button><button>Cancel</button>
  </footer>
</div>

<svg class="cursor" viewBox="0 0 12 20"><path d="M1 1v15l3.500-3 2.500 6 2.500-1-2.500-6H11.500z" fill="#fff" stroke="#111"/></svg>
</body>
</html>
```
FILE: styles.css
```
* { box-sizing: border-box; }
body {
  margin: 0;
  height: 100vh;
  padding: 9px 8px 8px 9px;
  position: relative;
  overflow: hidden;
  background: #fff;
  color: #2d3436;
  font: 11px/14px "DejaVu Sans", Verdana, sans-serif;
}
h1, h2, h3, p, ul { margin: 0; padding: 0; font-size: 11px; }
ul { list-style: none; }
button { margin: 0; padding: 0; border: 0; background: none; color: inherit; font: inherit; display: flex; align-items: center; justify-content: center; }
svg { width: 16px; height: 16px; flex: none; display: block; }
.defs { position: absolute; width: 0; height: 0; }
.glyph { font: bold 12px "Liberation Serif", serif; fill: #26374d; }
.glyph.big { font-size: 15px; }
.tiny { font: bold 6px "Liberation Sans", sans-serif; fill: #26374d; }
.mini { font: bold 9px "DejaVu Sans", sans-serif; fill: #111; }
.mini.it { font-style: italic; font-size: 8px; }
.s { font: bold 10px "Open Sans", sans-serif; fill: #fff; }
.s.sk { font-size: 11px; }
.s.g { font-size: 7px; }

.window { height: 100%; display: flex; flex-direction: column; box-shadow: 0 0 9px 1px rgba(0,0,0,.45); background: #f2f2f2; }

/* browser chrome */
.tabstrip { height: 29px; display: flex; justify-content: space-between; background: #c95e6a; border-bottom: 1px solid #9c3543; font: 12px/16px "Open Sans", "Noto Sans", sans-serif; }
.tabs { display: flex; padding-left: 6px; }
.tab { width: 193px; height: 29px; position: relative; display: flex; align-items: center; padding: 0 0 0 16px; color: #2b1e21; }
.tab .shape { position: absolute; left: 0; top: 0; width: 205px; height: 29px; }
.tab .shape path { fill: #cfb5b9; stroke: #a0626b; }
.tab.active { z-index: 1; color: #222; }
.tab.active .shape path { fill: #f2f2f2; stroke: #a0626b; }
.tab .ic, .tab span, .tab button { position: relative; }
.tab span { width: 136px; margin-left: 6px; white-space: nowrap; overflow: hidden; -webkit-mask-image: linear-gradient(90deg, #000 114px, transparent 136px); mask-image: linear-gradient(90deg, #000 114px, transparent 136px); }
.tab button { width: 14px; height: 14px; margin-left: 3px; }
.tab button svg { width: 10px; height: 10px; }
.newtab { margin-left: 10px; width: 34px; }
.newtab svg { width: 34px; height: 17px; }
.winbtns { display: flex; height: 19px; padding-right: 3px; }
.wb { width: 26px; height: 19px; }
.wb svg { width: 12px; height: 12px; }
.wb.cast { margin-right: 16px; }
.wb.user { width: 24px; background: #8c3f4a; }
.wb.close { width: 46px; background: #c94f50; }

.toolbar { height: 36px; display: flex; align-items: center; gap: 12px; padding: 0 10px; }
.toolbar button { width: 16px; height: 16px; }
.omnibox { flex: 1; height: 28px; display: flex; align-items: center; gap: 5px; margin-left: -2px; padding: 0 3px 0 5px; background: #fff; border: 1px solid #a9a9a9; border-radius: 3px; }
.url { flex: 1; white-space: nowrap; font: 14px/20px "Open Sans", "Noto Sans", sans-serif; color: #808080; }
.url b { font-weight: 400; color: #222; }
.skg { color: #b9b9b9; margin: 0 4px 0 -2px; }
.skb { color: #12a9ec; }
.bookmarks { height: 26px; display: flex; align-items: center; gap: 10px; padding: 0 15px 4px 10px; border-bottom: 1px solid #b0b0b0; font: 12px/16px "Open Sans", "Noto Sans", sans-serif; white-space: nowrap; }
.bookmarks a { display: flex; align-items: center; gap: 8px; color: #222; text-decoration: none; }
.overflow { margin-left: auto; width: 24px; font-size: 16px; }

/* application shell */
.app { flex: 1; min-height: 0; display: flex; flex-direction: column; padding: 4px; background: linear-gradient(#8d9195, #9aa0a5 50%, #c3ccd1); color: #959a98; }
.brandbar { height: 30px; display: flex; align-items: center; padding: 0 5px 0 7px; margin-bottom: 4px; background: linear-gradient(#fff, #e5e6e0 60%, #f7f8f3); }
.logo { width: 21px; height: 20px; }
.brandbar h1 { font: 14px/16px Lato, sans-serif; color: #a9ba96; padding-top: 12px; }
.brandbar p { margin-left: auto; font-weight: bold; }
.brandbar a, .show a { color: #b6dc98; }
.workspace { flex: 1; min-height: 0; display: flex; gap: 3px; padding: 3px; background: linear-gradient(#f0f1ec, #fafbf7); }
.bar { height: 24px; flex: none; display: flex; align-items: center; border: 1px solid #d3d5cc; background: linear-gradient(#fff, #eff1ec); box-shadow: inset 0 0 0 1px #fff; }
.bar h2 { font-weight: bold; padding-top: 1px; }
.side { width: 452px; flex: none; display: flex; flex-direction: column; }
.side .head { padding-left: 13px; justify-content: space-between; }
.collapse { width: 28px; height: 22px; padding-right: 6px; border-left: 1px solid #dcdfd8; }
.collapse::before { content: ""; border: 4px solid transparent; border-left: 0; border-right-color: #8f9491; }
.sidebody { flex: 1; min-height: 0; display: flex; flex-direction: column; gap: 4px; padding: 3px; border: 1px solid #d3d5cc; border-top: 0; background: #f8f9f6; }
.searchrow, .treebox, .show { background: #fff; border: 1px solid #d3d5cc; }
.searchrow { height: 28px; display: flex; align-items: center; padding: 0 3px; }
.round { width: 15px; height: 15px; margin: 0 4px 0 8px; border: 1px solid #c3c6bf; border-radius: 50%; background: #f5f6f3; }
.round::before, .dn::before { content: ""; border: 4px solid transparent; border-bottom: 0; border-top-color: #8f9491; }
.searchrow input { flex: 1; min-width: 0; height: 20px; border: 1px solid #cdd0c8; background: #fff; }
.sq { width: 20px; height: 20px; border: 1px solid #d3d5cc; background: linear-gradient(#fff, #eceee8); }
.sq.glass { border-left: 0; margin-right: 3px; width: 18px; }
.sq svg { opacity: .6; }
.sq .tinyx { width: 8px; height: 8px; }
.treebox { flex: 1; min-height: 0; display: flex; padding: 3px; }
.tree li { height: 20px; display: flex; align-items: center; white-space: nowrap; }
.tree svg { margin: 0 6px 0 8px; }
.tw { width: 9px; height: 9px; flex: none; border: 1px solid #808080; margin-bottom: 3px;
  background: linear-gradient(#222, #222) center / 5px 1px no-repeat, linear-gradient(#222, #222) center / 1px 5px no-repeat, #fff; }
.tw.minus { background: linear-gradient(#222, #222) center / 5px 1px no-repeat, #fff; }
.tw.none { border-color: transparent; background: none; }
.l1 { padding-left: 18px; } .l2 { padding-left: 36px; } .l3 { padding-left: 54px; } .l4 { padding-left: 72px; }
.l5 { padding-left: 90px; } .l6 { padding-left: 108px; } .l7 { padding-left: 126px; } .l8 { padding-left: 144px; }
.faded { flex: 1; overflow: hidden; opacity: .5; color: #111; padding-left: 3px; }
.scroll { width: 17px; flex: none; display: flex; flex-direction: column; align-items: center; background: #f7f7f7; }
.dn { margin-top: auto; height: 17px; display: flex; align-items: center; }
.up { height: 17px; display: flex; align-items: center; }
.up::before { content: ""; border: 4px solid transparent; border-top: 0; border-bottom-color: #c6c6c6; }
.thumb { width: 13px; height: 103px; background: #e0e0e0; }
.show { height: 27px; line-height: 27px; padding-left: 8px; font-weight: 400; }
.navitem { height: 25px; margin-top: 2px; flex: none; justify-content: flex-start; gap: 10px; padding-left: 5px; border: 1px solid #b4dc96; background: linear-gradient(#fff, #f6f7f4 50%, #e4e6df 51%, #f1f3ed); }
.navitem svg { opacity: .5; }
.navfoot { height: 24px; flex: none; border: 1px solid #d3d5cc; background: linear-gradient(#eeefeb, #fdfdfc); }

.main { flex: 1; min-width: 0; display: flex; flex-direction: column; }
.main > .head { padding-left: 6px; }
.steps { height: 23px; display: flex; align-items: center; gap: 16px; padding: 1px 0 0 7px; border: 1px solid #d3d5cc; border-top: 0; background: linear-gradient(#eef0eb, #fff); margin-bottom: 3px; }
.step { display: flex; align-items: center; gap: 5px; }
.step::before { content: ""; width: 11px; height: 11px; border-radius: 50%; background: linear-gradient(#b9bcba, #c9cac8 45%, #a6a8a6 60%, #cfcfcf); }
.steps .step::before { background: linear-gradient(#dadbda, #e0e0e0 45%, #cbcccb 60%, #e4e4e4); }
.step.on { color: #58b74c; }
.step.on::before { background: linear-gradient(#9ad04c, #7fbe2e 45%, #4a8a12 60%, #8ccb3a); }
.steps .step.on { color: #b3dcaa; }
.steps .step.on::before { background: linear-gradient(#d3ecb0, #bfe08f 45%, #9cc47c 60%, #cbe8a4); }
.cols { flex: 1; min-height: 0; display: flex; gap: 3px; }
.canvas { flex: 1; border: 1px solid #d3d5cc; background: #fff; }
.bar.inner { border-width: 0 0 1px; }
.right { width: 409px; display: flex; flex-direction: column; gap: 3px; }
.panel { display: flex; flex-direction: column; border: 1px solid #d3d5cc; background: #fefefe; }
.toolbox { height: 430px; }
.toolbox .list { flex: 1; margin: 3px 3px 0; display: flex; padding: 3px; border: 1px solid #d3d5cc; background: #fff; }
.groups { flex: 1; }
.group { height: 22px; border-bottom: 1px solid #d9dad6; }
.group.tall { height: 84px; }
.stub { width: 232px; height: 22px; margin: 0 0 3px 3px; border: 1px solid #d3d5cc; border-top: 0; background: #fff; }
.rules { flex: 1; min-height: 0; }
.rulebody { flex: 1; margin: 3px 3px 0; padding: 3px; display: flex; flex-direction: column; gap: 3px; border: 1px solid #d3d5cc; }
.ruletools { height: 24px; display: flex; align-items: center; justify-content: flex-end; padding-right: 28px; border: 1px solid #d3d5cc; background: linear-gradient(90deg, #fdfdfd, #f1f2ee); }
.ruletools button { gap: 5px; }
.ruletools svg, .ptabs svg { opacity: .6; }
.off { color: #dcdedb; }
.sep { width: 1px; height: 18px; margin: 0 6px; background: #c8cbc2; }
.rulelist { flex: 1; border: 1px solid #d3d5cc; background: #fff; }
.sel { height: 23px; margin: 1px; background: #eef6e0; }
.ptabs { height: 25px; display: flex; padding: 0 0 3px 3px; gap: 1px; }
.ptabs button { gap: 5px; padding: 0 6px; border: 1px solid #d3d5cc; border-top: 0; background: #f4f5f1; }
.ptabs .cur { background: #fff; margin-top: -1px; }

.buttons { display: flex; justify-content: flex-end; gap: 3px; }
.buttons button { width: 60px; height: 25px; border: 1px solid #a8ab9a; background: linear-gradient(#fff, #e4e7dd); color: #2d3436; box-shadow: inset 0 0 0 1px rgba(255,255,255,.6); }
.buttons .info { width: 25px; border-color: #3f63b5; background: linear-gradient(#6f92da, #2e50a4); box-shadow: none; }
.buttons .icon { width: 25px; }
.buttons button:disabled { color: #9a9d9b; border-color: #c9cbc3; background: linear-gradient(#f2f3f1, #e6e7e4); }
.dim { padding-top: 4px; opacity: .5; }

/* mapping dialog */
.dialog { position: absolute; left: 201px; right: 200px; top: 199px; bottom: 107px; display: flex; flex-direction: column; filter: drop-shadow(5px 6px 3px rgba(0,0,0,.5)); }
.dframe { flex: 1; min-height: 0; display: flex; flex-direction: column; border: 2px solid #0d1012; background: linear-gradient(#c8cabd, #d2d4ca 40%, #ebecec); }
.dtitle { height: 24px; flex: none; display: flex; align-items: center; gap: 1px; padding: 0 1px 0 5px; background: linear-gradient(#5b6164, #3a4043 50%, #1c2022); color: #fff; }
.dtitle h2 { flex: 1; font-weight: bold; }
.dtitle button { width: 19px; height: 19px; border: 1px solid #7e8e97; background: linear-gradient(#8595a0, #4e5c66 50%, #37434c 51%, #5b6b75); }
.dtitle button svg { width: 12px; height: 12px; }
.dbody { flex: 1; min-height: 0; display: flex; flex-direction: column; gap: 3px; padding: 3px 3px 2px 4px; }
.dtools { border: 1px solid #a8ab9a; flex: none; }
.drow1, .drow2 { display: flex; align-items: center; box-shadow: inset 0 0 0 1px #fff; }
.drow1 { height: 23px; gap: 16px; padding: 1px 0 0 7px; background: linear-gradient(#fff, #dde2da); border-bottom: 1px solid #a8ab9a; }
.drow2 { height: 23px; padding-left: 5px; background: linear-gradient(#dfe4dc, #fcfcfb); }
.drow2 button { gap: 3px; }
.drow2 .off { gap: 4px; }
.dcols { flex: 1; min-height: 0; display: flex; gap: 3px; }
.dpanel { background: #fff; border: 1px solid #a8ab9a; color: #111; }
.dpanel h3 { height: 23px; line-height: 22px; padding-left: 5px; font-weight: bold; color: #2d3436; background: linear-gradient(#fcfcfb, #dde2da); border-bottom: 1px solid #a8ab9a; box-shadow: inset 0 0 0 1px #fff; }
.dest { flex: 1; min-width: 0; }
.ctx { width: 300px; }
.dpanel .tree { padding: 3px 0 0 5px; }
.ctx .tree { padding-left: 6px; }
.maps { padding: 0 4px 0 76px; display: flex; flex-direction: column; gap: 4px; }
.map { height: 24px; display: flex; align-items: center; color: #2d3436; position: relative; }
.map label { width: 215px; flex: none; display: flex; align-items: center; gap: 3px; padding: 0 0 4px 4px; }
.map input[type=checkbox] { appearance: none; width: 14px; height: 14px; flex: none; margin: 0 0 4px; border: 1px solid #9b9b9b; background: linear-gradient(#f0f0ef, #fdfdfd); position: relative; }
.map input[type=checkbox]:checked::before { content: ""; position: absolute; inset: 2px; background: #4f9a1e; clip-path: polygon(0 45%, 20% 38%, 38% 60%, 85% 10%, 100% 22%, 42% 95%, 30% 92%); }
.field { flex: 1; min-width: 0; height: 24px; display: flex; align-items: center; border: 1px solid #a8ab9a; background: #fff; box-shadow: inset 1px 1px 0 #dcded6; padding: 0 0 1px 4px; font: 11px/14px "DejaVu Sans", Verdana, sans-serif; }
.field::placeholder { color: #b4b4b4; font-style: italic; opacity: 1; }
.field .chip { height: 18px; display: flex; align-items: center; gap: 2px; margin: 0 0 2px 4px; padding-right: 3px; background: #72b635; color: #fff; font: bold 11px/14px "Open Sans", "Noto Sans", sans-serif; }
.req::after { content: ""; position: absolute; left: 226px; top: 4px; width: 2px; height: 17px; background: #d27c26; }
.dfoot { align-self: flex-end; margin-top: -2px; height: 31px; padding: 1px 3px 0; border: 2px solid #0d1012; border-top: 0; background: #ebecec; }
.cursor { position: absolute; left: 136px; top: 15px; width: 12px; height: 20px; z-index: 5; }
```
